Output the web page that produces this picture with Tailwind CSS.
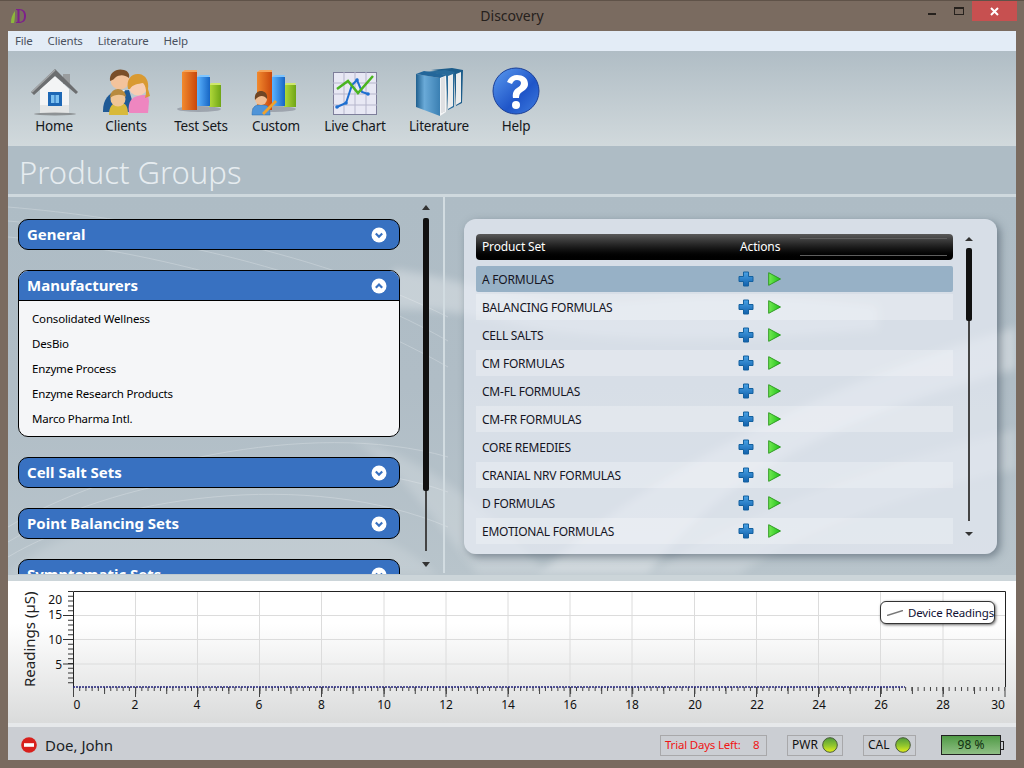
<!DOCTYPE html>
<html lang="en">
<head>
    <meta charset="UTF-8">
    <title>Discovery</title>
    <script src="https://cdn.jsdelivr.net/npm/@tailwindcss/browser@4"></script>
</head>
<body class="w-[1024px] h-[768px] overflow-hidden bg-[#7a6b60] font-['Noto_Sans',sans-serif] text-[12px] text-[#111]">

    <!-- shared gradients + repeated icons -->
    <svg width="0" height="0" class="absolute">
        <defs>
            <linearGradient id="orange" x1="0" x2="1" y1="0" y2="0"><stop offset="0" stop-color="#f28a2e"/><stop offset="1" stop-color="#c9470c"/></linearGradient>
            <linearGradient id="blue" x1="0" x2="1" y1="0" y2="0"><stop offset="0" stop-color="#5cb4ff"/><stop offset="1" stop-color="#1665c4"/></linearGradient>
            <linearGradient id="green" x1="0" x2="1" y1="0" y2="0"><stop offset="0" stop-color="#b5dc3c"/><stop offset="1" stop-color="#6fa516"/></linearGradient>
            <linearGradient id="plusfill" x1="0" x2="0" y1="0" y2="1"><stop offset="0" stop-color="#4aa3e6"/><stop offset="1" stop-color="#1060ac"/></linearGradient>
            <linearGradient id="playfill" x1="0" x2="1" y1="0" y2="0"><stop offset="0" stop-color="#74ea52"/><stop offset="1" stop-color="#1cc018"/></linearGradient>
            <linearGradient id="led" x1="0" x2="0" y1="0" y2="1"><stop offset="0" stop-color="#4f9a3a"/><stop offset="0.55" stop-color="#93c72e"/><stop offset="1" stop-color="#e6f01a"/></linearGradient>
            <linearGradient id="helpfill" x1="0" x2="1" y1="0" y2="1"><stop offset="0" stop-color="#5b9bf0"/><stop offset="0.6" stop-color="#1f55c8"/><stop offset="1" stop-color="#3f7de0"/></linearGradient>
            <linearGradient id="bookfill" x1="0" x2="1" y1="0" y2="0"><stop offset="0" stop-color="#1f5f8e"/><stop offset="0.35" stop-color="#6aaad8"/><stop offset="1" stop-color="#3a7fb2"/></linearGradient>
            <symbol id="plus" viewBox="0 0 16 16"><path d="M5.500 1h5v4.500H15v5h-4.500V15h-5v-4.500H1v-5h4.500z" fill="url(#plusfill)" stroke="#14619f" stroke-width="1"/></symbol>
            <symbol id="play" viewBox="0 0 13 14"><path d="M.7.7 12.500 7 .7 13.300z" fill="url(#playfill)" stroke="#2f9a22" stroke-width="1"/></symbol>
            <symbol id="bars" viewBox="0 0 50 50">
                <ellipse cx="23" cy="42" rx="22" ry="3" fill="#556" opacity=".35"/>
                <path d="M33 18h12v22H33z" fill="url(#green)"/><path d="M33 18l2-2h10l-1 2z" fill="#cfe86a"/>
                <path d="M21 10h13v29H21z" fill="url(#blue)"/><path d="M21 10l3-2h10l-1 2z" fill="#7cc4ff"/>
                <path d="M6 5h15v38H6z" fill="url(#orange)"/><path d="M6 5l3-2h12v2z" fill="#f6a55a"/>
            </symbol>
            <symbol id="chev" viewBox="0 0 16 16"><circle cx="8" cy="8" r="7.500" fill="#fff"/><path d="M4.800 6.500 8 9.700l3.200-3.200" fill="none" stroke="#3871c1" stroke-width="2.200"/></symbol>
            <symbol id="chevup" viewBox="0 0 16 16"><circle cx="8" cy="8" r="7.500" fill="#fff"/><path d="M4.800 9.700 8 6.500l3.200 3.200" fill="none" stroke="#3871c1" stroke-width="2.200"/></symbol>
        </defs>
    </svg>

    <!-- title bar -->
    <header class="relative h-[31px] flex items-center justify-center border-t border-[#5f5248]">
        <svg class="absolute left-[9px] top-[6px]" width="18" height="18" viewBox="0 0 18 18">
            <path d="M2 16C2 11 3 8 6 4c0 4 0 8-1 12z" fill="#8db83a"/>
            <path d="M7 2h3c5 0 7 3 7 7 0 5-3 7-7 7H7v-1c1 0 1.500 0 1.500-1V4C8.500 3 8 3 7 3z" fill="#7d1f8c"/>
            <path d="M10.500 3.200v11.600c3.500 0 4.500-2.500 4.500-5.800S14 3.200 10.500 3.200z" fill="#7a6b60"/>
        </svg>
        <span class="text-[14px] text-[#26211d] -mt-[2px]">Discovery</span>
        <div class="absolute right-[7px] top-0 flex items-start">
            <div class="w-[8px] h-[2px] bg-[#26211d] mt-[12px] mr-[18px]"></div>
            <div class="w-[10px] h-[8px] border border-[#26211d] border-t-2 mt-[6px] mr-[8px]"></div>
            <div class="w-[45px] h-[20px] bg-[#c75050] flex items-center justify-center text-white">
                <svg width="9" height="9" viewBox="0 0 9 9"><path d="M1 1l7 7M8 1 1 8" stroke="#fff" stroke-width="2"/></svg>
            </div>
        </div>
    </header>

    <div class="mx-2 h-[729px] flex flex-col">
        <!-- menu -->
        <nav class="h-[20px] bg-[#e3ecf6] flex items-center pl-[7px] gap-[15px] text-[11.5px] tracking-[-0.2px] text-[#4b5260]">
            <span>File</span>
            <span>Clients</span>
            <span>Literature</span>
            <span>Help</span>
        </nav>

        <!-- toolbar -->
        <div class="h-[95px] bg-gradient-to-b from-[#b0bdc5] to-[#d1d9dc] flex pl-[10px] text-[13.5px] tracking-[-0.2px] leading-[16px] text-[#15181c]">
            <div class="w-[72px] flex flex-col items-center pt-[16px]">
                <svg width="50" height="50" viewBox="0 0 50 50">
                    <path d="M11 22 26 9l14 13v24H11z" fill="#f3f4f5"/>
                    <path d="M11 38h29v8H11z" fill="#d9dadb" opacity=".6"/>
                    <path d="M34 7h7v10h-7z" fill="#9a9d9f"/>
                    <path d="M2 25 26 2l23 23-2 2-21-18L5 28z" fill="#6c6e70"/>
                    <path d="M3 25 26 3" stroke="#a4a6a8" stroke-width="1.500" fill="none"/>
                    <rect x="19" y="25" width="14" height="14" fill="#1d67b5"/>
                    <rect x="22" y="28" width="8" height="8" fill="#7cc0f0"/>
                    <path d="M26 28v8" stroke="#1d67b5"/>
                    <ellipse cx="26" cy="47" rx="21" ry="1.500" fill="#555" opacity=".5"/>
                </svg>
                <span class="mt-[1px]">Home</span>
            </div>
            <div class="w-[72px] flex flex-col items-center pt-[16px]">
                <svg width="50" height="50" viewBox="0 0 50 50">
                    <path d="M2 44c0-12 6-18 14-20l12-1 3 10-3 12H2z" fill="#1f5a96"/>
                    <circle cx="19" cy="13" r="9.500" fill="#f3c39c"/>
                    <path d="M9 14C8 5 16 1 23 3c4 1 6 4 5 8-5-4-10-3-13-1-2 2-3 3-6 4z" fill="#7a4f2a"/>
                    <path d="M14 23h10l-4 9z" fill="#f5f5f5"/>
                    <path d="M28 46c-2-13 4-19 19-18l1 6-1 12z" fill="#ee86c0"/>
                    <circle cx="37" cy="19" r="9.500" fill="#f8cdb2"/>
                    <path d="M27 22c-2-10 4-16 11-15 7 1 10 7 9 15l2 7-5 2c2-6 1-12-2-15-5 1-10 1-13 6z" fill="#d99a32"/>
                    <path d="M8 48c0-8 3-12 8-12h4c5 0 7 4 7 12z" fill="#d8b93a"/>
                    <circle cx="17" cy="32" r="7.500" fill="#f0c596"/>
                    <path d="M9 31c0-6 4-9 8-9s8 3 8 8c-4-3-11-3-16 1z" fill="#b88a3e"/>
                </svg>
                <span class="mt-[1px]">Clients</span>
            </div>
            <div class="w-[78px] flex flex-col items-center pt-[16px]">
                <svg width="50" height="50"><use href="#bars"/></svg>
                <span class="mt-[1px]">Test Sets</span>
            </div>
            <div class="w-[72px] flex flex-col items-center pt-[16px]">
                <svg width="50" height="50" viewBox="0 0 50 50">
                    <use href="#bars" width="50" height="50"/>
                    <path d="M1 48c0-8 3-10 7-10h5c4 0 6 3 6 10z" fill="#4f94d8" stroke="#2a6cad" stroke-width=".5"/>
                    <circle cx="10" cy="32" r="6" fill="#efbe95"/>
                    <path d="M4 33c-1-7 3-9 6-9s7 2 6 8c-3-4-8-4-12 1z" fill="#6f4524"/>
                    <path d="M11 46 24 33l2 2-13 13z" fill="#f0a22e"/>
                </svg>
                <span class="mt-[1px]">Custom</span>
            </div>
            <div class="w-[86px] flex flex-col items-center pt-[16px]">
                <svg width="50" height="50" viewBox="0 0 50 50">
                    <rect x="3.500" y="5.500" width="43" height="42" fill="#e8e8f4" stroke="#7e7e9a"/>
                    <path d="M3 16h44M3 27h44M3 38h44M14 5v42M25 5v42M36 5v42" stroke="#b6b6cc"/>
                    <path d="M7 40 16 36 22 18 27 13 32 25 38 27" fill="none" stroke="#1f6fd0" stroke-width="2"/>
                    <path d="M7 22 18 14 28 26 43 9" fill="none" stroke="#4ab520" stroke-width="2.500"/>
                    <g fill="#1f6fd0"><circle cx="7" cy="40" r="1.800"/><circle cx="16" cy="36" r="1.800"/><circle cx="27" cy="13" r="1.800"/><circle cx="38" cy="27" r="1.800"/></g>
                </svg>
                <span class="mt-[1px]">Live Chart</span>
            </div>
            <div class="w-[82px] flex flex-col items-center pt-[16px]">
                <svg width="50" height="50" viewBox="0 0 50 50">
                    <!-- back to front: three books leaning right -->
                    <path d="M17 3 38 1 49 3 48 36 42 39 40 6z" fill="#1c5c8a"/>
                    <path d="M42 7 47 5V35L42 38z" fill="#eceded"/>
                    <path d="M10 5 31 3 41 5 40 6 40 40 34 43 32 8z" fill="#286a9a"/>
                    <path d="M34 9 39 7V39L34 42z" fill="#eceded"/>
                    <path d="M2 7 26 11V49L2 40z" fill="url(#bookfill)"/>
                    <path d="M2 7 10 4 33 8 26 11z" fill="#23669a"/>
                    <path d="M26 11 32 9V45L26 49z" fill="#f4f5f6"/>
                    <path d="M28 11V46M30 10V45" stroke="#b8bcc0" stroke-width=".7"/>
                </svg>
                <span class="mt-[1px]">Literature</span>
            </div>
            <div class="w-[72px] flex flex-col items-center pt-[16px]">
                <svg width="50" height="50" viewBox="0 0 50 50">
                    <circle cx="25" cy="24" r="23" fill="url(#helpfill)" stroke="#1b3f96"/>
                    <path d="M16 15c2-5 6-7 10-7 6 0 11 3 11 9 0 4-3 6-6 8-2 1-3 3-3 6h-6c-1-5 1-8 4-10 2-1 4-3 4-5 0-2-2-3-4-3-3 0-4 2-5 4z" fill="#fff"/>
                    <circle cx="25" cy="38" r="4" fill="#fff"/>
                </svg>
                <span class="mt-[1px]">Help</span>
            </div>
        </div>

        <!-- page title -->
        <div class="h-[48px] bg-[#aebcc5] flex items-center pl-[11px] pt-[4px]">
            <h1 class="text-[31px] font-light text-[#e6ecf0] leading-none">Product Groups</h1>
        </div>
        <div class="h-[3px] bg-[#cfd9de]"></div>

        <!-- main -->
        <main class="relative h-[378px] flex bg-gradient-to-b from-[#aebcc5] via-[#b0bdc6] to-[#b8c4cb] overflow-hidden">
            <!-- background swirl -->
            <svg class="absolute inset-0 blur-[4px]" width="1008" height="378" viewBox="0 0 1008 378" fill="none">
                <path d="M385 72C450 80 520 112 640 102 720 94 800 100 870 108V132C760 142 600 150 500 126 450 114 420 112 385 112z" fill="#fff" opacity=".3"/>
                <path d="M530 378C620 290 800 190 1008 130V172C820 222 700 290 640 378z" fill="#fff" opacity=".34"/>
                <path d="M640 378C720 320 880 262 1008 232V272C880 302 780 340 730 378z" fill="#fff" opacity=".2"/>
                <path d="M340 240C380 262 410 300 470 378H540C480 310 420 262 340 240z" fill="#fff" opacity=".18"/>
                <path d="M0 378C60 320 180 300 300 320 360 330 400 350 430 378z" fill="#fff" opacity=".14"/>
            </svg>
            <svg class="absolute inset-0" width="1008" height="378" viewBox="0 0 1008 378" fill="none">
                <g stroke="#fff" opacity=".22">
                    <path d="M0 10c120 10 300 40 440 110"/><path d="M0 24c120 10 300 40 440 120"/><path d="M0 40c120 10 300 50 440 130"/>
                    <path d="M0 330c100-60 300-110 440-70"/><path d="M0 345c100-60 300-100 440-50"/><path d="M0 360c100-60 300-90 440-30"/>
                </g>
            </svg>

            <div class="relative w-[435px] flex">
                <div class="w-[392px] h-[377px] overflow-hidden pt-[22px] pl-[10px] flex flex-col gap-[20px]">
                    <div class="w-[382px] h-[31px] shrink-0 rounded-[10px] border border-black bg-[#3871c1] flex items-center justify-between pl-[8px] pr-[12px] text-[15px] font-bold text-white">
                        <span>General</span>
                        <svg width="16" height="16"><use href="#chev"/></svg>
                    </div>
                    <div class="w-[382px] shrink-0 rounded-[10px] border border-black overflow-hidden bg-[#f5f6f8]">
                        <div class="h-[30px] border-b border-black bg-[#3871c1] flex items-center justify-between pl-[8px] pr-[12px] text-[15px] font-bold text-white">
                            <span>Manufacturers</span>
                            <svg width="16" height="16"><use href="#chevup"/></svg>
                        </div>
                        <ul class="pt-[5px] pb-[5px] pl-[13px] text-[11.5px] tracking-[-0.17px] leading-[25px] text-black">
                            <li>Consolidated Wellness</li>
                            <li>DesBio</li>
                            <li>Enzyme Process</li>
                            <li>Enzyme Research Products</li>
                            <li>Marco Pharma Intl.</li>
                        </ul>
                    </div>
                    <div class="w-[382px] h-[31px] shrink-0 rounded-[10px] border border-black bg-[#3871c1] flex items-center justify-between pl-[8px] pr-[12px] text-[15px] font-bold text-white">
                        <span>Cell Salt Sets</span>
                        <svg width="16" height="16"><use href="#chev"/></svg>
                    </div>
                    <div class="w-[382px] h-[31px] shrink-0 rounded-[10px] border border-black bg-[#3871c1] flex items-center justify-between pl-[8px] pr-[12px] text-[15px] font-bold text-white">
                        <span>Point Balancing Sets</span>
                        <svg width="16" height="16"><use href="#chev"/></svg>
                    </div>
                    <div class="w-[382px] h-[31px] shrink-0 rounded-[10px] border border-black bg-[#3871c1] flex items-center justify-between pl-[8px] pr-[12px] text-[15px] font-bold text-white">
                        <span>Symptomatic Sets</span>
                        <svg width="16" height="16"><use href="#chev"/></svg>
                    </div>
                </div>
                <!-- left scrollbar -->
                <div class="ml-[21px] w-[10px] flex flex-col items-center pt-[8px]">
                    <div class="w-0 h-0 border-x-[4px] border-x-transparent border-b-[5px] border-b-[#333]"></div>
                    <div class="w-[6px] h-[273px] mt-[8px] bg-[#111] rounded-[2px]"></div>
                    <div class="w-[2px] h-[60px] bg-[#444]"></div>
                    <div class="w-0 h-0 mt-[11px] border-x-[4px] border-x-transparent border-t-[5px] border-t-[#333]"></div>
                </div>
            </div>
            <div class="relative w-[2px] h-[376px] bg-[#d2dce1]"></div>

            <!-- product sets card -->
            <div class="relative pl-[19px] pt-[22px]">
                <div class="w-[533px] h-[335px] rounded-[12px] bg-[#e8edf5]/70 shadow-[3px_3px_8px_rgba(60,75,90,0.55)] pl-[12px] pt-[15px] flex">
                    <div class="w-[477px]">
                        <div class="relative h-[26px] rounded-[4px] bg-gradient-to-b from-[#5a5a5a] via-[#1c1c1c] to-black flex items-center pl-[6px] text-[12px] tracking-[-0.15px] text-white">
                            <span class="w-[258px]">Product Set</span>
                            <span>Actions</span>
                            <div class="absolute left-[324px] right-[6px] top-[4px] bottom-[4px] border-y border-[#5e5e5e]"></div>
                        </div>
                        <div class="mt-[6px] flex flex-col gap-[2px] text-[12px] tracking-[-0.22px] text-[#15151f]">
                            <div class="h-[26px] rounded-[2px] bg-[#97b1c6] flex items-center pl-[6px]">
                                <span class="w-[256px] pt-[1px]">A FORMULAS</span>
                                <svg width="16" height="16"><use href="#plus"/></svg>
                                <svg class="ml-[14px]" width="13" height="14"><use href="#play"/></svg>
                            </div>
                            <div class="h-[26px] bg-white/25 flex items-center pl-[6px]">
                                <span class="w-[256px] pt-[1px]">BALANCING FORMULAS</span>
                                <svg width="16" height="16"><use href="#plus"/></svg>
                                <svg class="ml-[14px]" width="13" height="14"><use href="#play"/></svg>
                            </div>
                            <div class="h-[26px] flex items-center pl-[6px]">
                                <span class="w-[256px] pt-[1px]">CELL SALTS</span>
                                <svg width="16" height="16"><use href="#plus"/></svg>
                                <svg class="ml-[14px]" width="13" height="14"><use href="#play"/></svg>
                            </div>
                            <div class="h-[26px] bg-white/25 flex items-center pl-[6px]">
                                <span class="w-[256px] pt-[1px]">CM FORMULAS</span>
                                <svg width="16" height="16"><use href="#plus"/></svg>
                                <svg class="ml-[14px]" width="13" height="14"><use href="#play"/></svg>
                            </div>
                            <div class="h-[26px] flex items-center pl-[6px]">
                                <span class="w-[256px] pt-[1px]">CM-FL FORMULAS</span>
                                <svg width="16" height="16"><use href="#plus"/></svg>
                                <svg class="ml-[14px]" width="13" height="14"><use href="#play"/></svg>
                            </div>
                            <div class="h-[26px] bg-white/25 flex items-center pl-[6px]">
                                <span class="w-[256px] pt-[1px]">CM-FR FORMULAS</span>
                                <svg width="16" height="16"><use href="#plus"/></svg>
                                <svg class="ml-[14px]" width="13" height="14"><use href="#play"/></svg>
                            </div>
                            <div class="h-[26px] flex items-center pl-[6px]">
                                <span class="w-[256px] pt-[1px]">CORE REMEDIES</span>
                                <svg width="16" height="16"><use href="#plus"/></svg>
                                <svg class="ml-[14px]" width="13" height="14"><use href="#play"/></svg>
                            </div>
                            <div class="h-[26px] bg-white/25 flex items-center pl-[6px]">
                                <span class="w-[256px] pt-[1px]">CRANIAL NRV FORMULAS</span>
                                <svg width="16" height="16"><use href="#plus"/></svg>
                                <svg class="ml-[14px]" width="13" height="14"><use href="#play"/></svg>
                            </div>
                            <div class="h-[26px] flex items-center pl-[6px]">
                                <span class="w-[256px] pt-[1px]">D FORMULAS</span>
                                <svg width="16" height="16"><use href="#plus"/></svg>
                                <svg class="ml-[14px]" width="13" height="14"><use href="#play"/></svg>
                            </div>
                            <div class="h-[26px] bg-white/25 flex items-center pl-[6px]">
                                <span class="w-[256px] pt-[1px]">EMOTIONAL FORMULAS</span>
                                <svg width="16" height="16"><use href="#plus"/></svg>
                                <svg class="ml-[14px]" width="13" height="14"><use href="#play"/></svg>
                            </div>
                        </div>
                    </div>
                    <!-- right scrollbar -->
                    <div class="ml-[11px] w-[10px] flex flex-col items-center pt-[3px]">
                        <div class="w-0 h-0 border-x-[4px] border-x-transparent border-b-[4px] border-b-[#333]"></div>
                        <div class="w-[6px] h-[73px] mt-[7px] bg-[#111] rounded-[2px]"></div>
                        <div class="w-[2px] h-[200px] bg-[#444]"></div>
                        <div class="w-0 h-0 mt-[11px] border-x-[4px] border-x-transparent border-t-[4px] border-t-[#333]"></div>
                    </div>
                </div>
            </div>
        </main>
        <div class="h-[6px] bg-[#ccd5d9]"></div>

        <!-- readings chart -->
        <section class="relative h-[142px] bg-[linear-gradient(#fff_30%,#dadbdb)]">
            <svg class="absolute inset-0" width="1008" height="142" viewBox="8 581 1008 142" fill="none" font-family="Noto Sans" font-size="12">
                <g stroke="#dcdcdc">
                    <path d="M73 615.500H1005M73 639.500H1005M73 664H1005"/>
                    <path d="M135.500 591v96M197.500 591v96M259.500 591v96M321.500 591v96M384 591v96M446 591v96M508 591v96M570 591v96M632 591v96M694.500 591v96M756.500 591v96M818.500 591v96M880.500 591v96M943 591v96"/>
                </g>
                <path d="M73.500 687V591.500H1005.500V687" stroke="#222" stroke-width="1"/>
                <!-- axis ticks -->
                <path d="M73 689H1005" stroke="#444" stroke-width="4" stroke-dasharray="1 5.210"/>
                <path d="M73 690.500H1005" stroke="#444" stroke-width="7" stroke-dasharray="1 30.070"/>
                <path d="M73.500 687V697M135.500 687V697M197.500 687V697M259.500 687V697M321.500 687V697M384 687V697M446 687V697M508 687V697M570 687V697M632 687V697M694.500 687V697M756.500 687V697M818.500 687V697M880.500 687V697M943 687V697M1005 687V697" stroke="#444"/>
                <path d="M70.500 591V687" stroke="#333" stroke-width="5" stroke-dasharray="1 3.800"/>
                <path d="M63 615.500H73M63 639.500H73M63 664H73" stroke="#333"/>
                <path d="M73 687H905" stroke="#22227a" stroke-width="1.500" stroke-dasharray="2 1"/>
                <g fill="#111" text-anchor="middle">
                    <text x="77" y="709">0</text><text x="135" y="709">2</text><text x="197" y="709">4</text><text x="259" y="709">6</text><text x="321.500" y="709">8</text><text x="384" y="709">10</text><text x="446" y="709">12</text><text x="508" y="709">14</text><text x="570" y="709">16</text><text x="632" y="709">18</text><text x="695" y="709">20</text><text x="757" y="709">22</text><text x="819" y="709">24</text><text x="881" y="709">26</text><text x="943" y="709">28</text><text x="998" y="709">30</text>
                </g>
                <g fill="#111" text-anchor="end">
                    <text x="62" y="604">20</text><text x="62" y="619">15</text><text x="62" y="644">10</text><text x="62" y="669">5</text>
                </g>
                <text transform="translate(35 687) rotate(-90)" fill="#222" font-size="15">Readings (µS)</text>
            </svg>
            <!-- legend over the plot -->
            <div class="absolute left-[872px] top-[20px] w-[115px] h-[23px] rounded-[6px] bg-white border border-[#333] shadow-[1px_1px_3px_rgba(0,0,0,0.6)] flex items-center pl-[6px] gap-[5px] text-[11.5px] tracking-[-0.15px] whitespace-nowrap text-[#111133]">
                <svg width="16" height="6" class="shrink-0"><path d="M0 5.500 16 .5" stroke="#777" stroke-width="1.500"/></svg>
                <span>Device Readings</span>
            </div>
        </section>
        <div class="h-[4px] bg-[#e6e8ea]"></div>

        <!-- status bar -->
        <footer class="h-[33px] bg-[#cbced3] flex items-center pl-[13px] pt-[3px] relative">
            <svg width="16" height="16" viewBox="0 0 16 16">
                <circle cx="8" cy="8" r="7.800" fill="#d8201c"/>
                <rect x="3" y="6.200" width="10" height="3.600" fill="#fff"/>
            </svg>
            <span class="ml-[8px] text-[15px] text-[#1b1f26]">Doe, John</span>
            <div class="ml-auto flex items-center mr-[12px]">
                <div class="w-[107px] h-[21px] border border-[#a8a8aa] flex items-center pl-[4px] text-[11.5px] tracking-[-0.2px] whitespace-nowrap text-[#f01414]">
                    <span class="w-[78px]">Trial Days Left:</span>
                    <span class="ml-[10px]">8</span>
                </div>
                <div class="ml-[20px] w-[56px] h-[21px] border border-[#a8a8aa] flex items-center justify-between pl-[4px] pr-[4px] text-[12px]">
                    PWR
                    <svg width="16" height="16"><circle cx="8" cy="8" r="7.300" fill="url(#led)" stroke="#4a5a3a"/></svg>
                </div>
                <div class="ml-[20px] w-[53px] h-[21px] border border-[#a8a8aa] flex items-center justify-between pl-[4px] pr-[4px] text-[12px]">
                    CAL
                    <svg width="16" height="16"><circle cx="8" cy="8" r="7.300" fill="url(#led)" stroke="#4a5a3a"/></svg>
                </div>
                <div class="ml-[25px] w-[60px] h-[20px] border border-[#222] bg-gradient-to-b from-[#4f9a45] to-[#8fbf85] flex items-center justify-center text-[12px] text-[#123012]">98 %</div>
                <div class="w-[3px] h-[9px] border border-l-0 border-[#222]"></div>
            </div>
        </footer>
    </div>

</body>
</html>
